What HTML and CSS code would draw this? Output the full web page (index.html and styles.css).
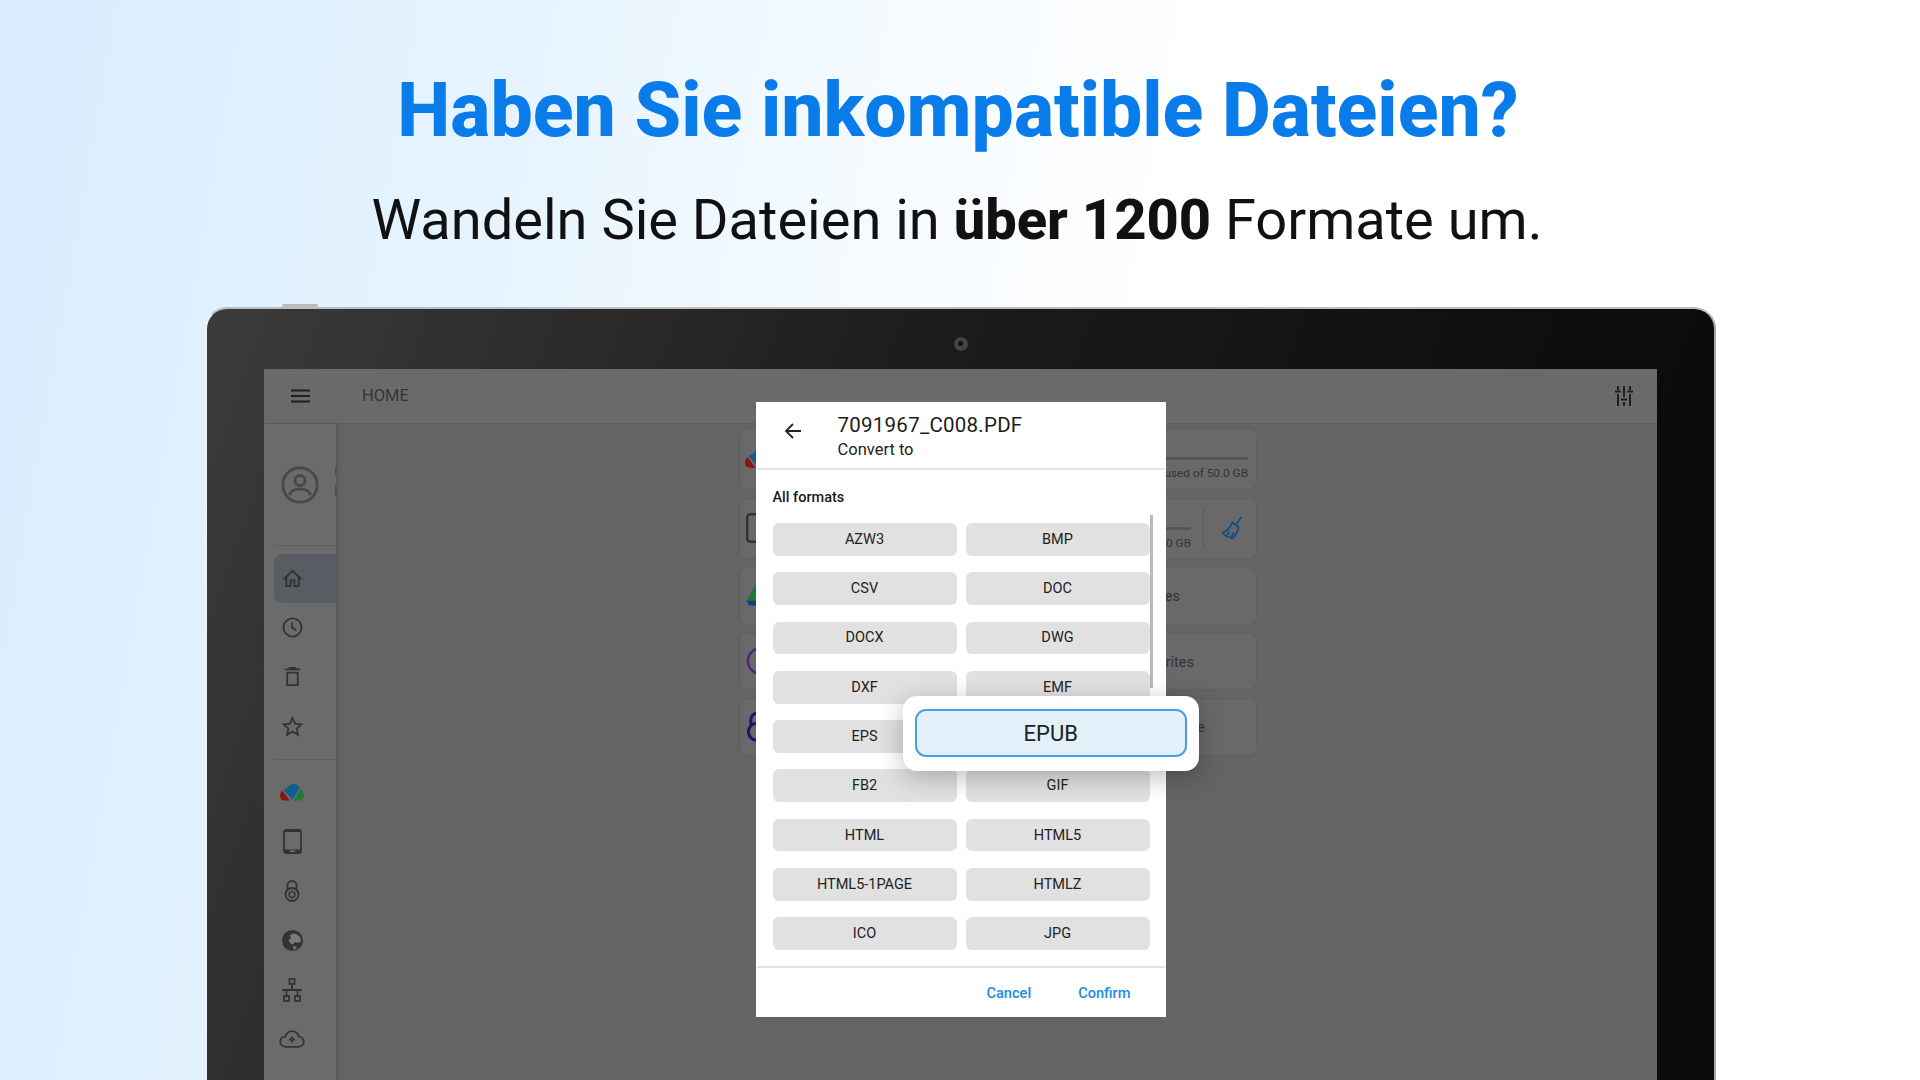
FILE: index.html
```html
<!DOCTYPE html>
<html lang="de">
<head>
<meta charset="utf-8">
<title>Haben Sie inkompatible Dateien?</title>
<link rel="stylesheet" href="styles.css">
</head>
<body>
<div class="page">
  <header class="hero">
    <h1 class="hero-title">Haben Sie inkompatible Dateien?</h1>
    <p class="hero-sub">Wandeln Sie Dateien in <strong>über 1200</strong> Formate um.</p>
  </header>

  <div class="tablet">
    <span class="tablet-button"></span>
    <div class="bezel-top"><span class="camera"><span class="camera-lens"></span></span></div>
    <div class="screen">
      <div class="topbar">
        <svg class="ic-menu" viewBox="0 0 19 14"><path d="M0 1.5h19M0 7h19M0 12.5h19"/></svg>
        <span class="topbar-title">HOME</span>
        <svg class="ic-tune" viewBox="0 0 18 20"><path d="M3 0v4M0 5.5h6M3 8v12M9 0v11M6 13.5h6M9 16v4M15 0v4M12 5.5h6M15 8v12"/></svg>
      </div>
      <div class="main">
        <aside class="sidebar">
          <span class="edge-mark edge-mark-a"></span>
          <span class="edge-mark edge-mark-b"></span>
          <div class="avatar-block">
            <svg class="ic-avatar" viewBox="0 0 38 38"><circle cx="19" cy="19" r="17.2"/><circle cx="19" cy="14.5" r="5"/><path d="M8 29c2-4.500 6-6 11-6s9 1.500 11 6"/></svg>
          </div>
          <div class="side-rule"></div>
          <nav class="side-group">
            <div class="side-item is-active"><svg class="ic" viewBox="0 0 24 24"><path d="M3 12.500 12 4l9 8.500M5.500 10.500V20H10v-6h4v6h4.500v-9.500"/></svg></div>
            <div class="side-item"><svg class="ic" viewBox="0 0 24 24"><circle cx="12" cy="12" r="9.500"/><path d="M11.500 6.500V12l4.500 3"/></svg></div>
            <div class="side-item"><svg class="ic" viewBox="0 0 24 24"><path d="M4 4.500h16M9 4.500V3h6v1.500M6.500 8h11v13h-11z"/></svg></div>
            <div class="side-item"><svg class="ic" viewBox="0 0 24 24"><path d="m12 3 2.700 6.100 6.600.7-5 4.400 1.500 6.500L12 17.300l-5.800 3.400 1.500-6.500-5-4.400 6.600-.7z"/></svg></div>
          </nav>
          <div class="side-rule side-rule-second"></div>
          <nav class="side-group side-group-second">
            <div class="side-item"><svg class="ic-logo" viewBox="0 0 24 17"><path class="c-blue" d="M3.500 6C4.500 4.600 6 4.200 7.200 4.300 8.300 1.800 10.700 0 13.700 0c3 0 5.200 1.600 6.200 4.200L12.300 15.800z"/><path class="c-red" d="M2.300 6.800 9.800 16.500H4C1.600 16.500 0 14.500 0 12c0-2 .8-3.900 2.300-5.200z"/><path class="c-green" d="M20.800 5.200 13.200 16.500h6C22 16.500 24 14.300 24 11.500c0-2.600-1.200-4.900-3.200-6.300z"/></svg></div>
            <div class="side-item"><svg class="ic-device" viewBox="0 0 19 25"><rect x="1" y="1" width="17" height="23" rx="2"/><path class="fill-line" d="M1 20.500h17v3H1zM1 1h17v2H1z"/><rect class="device-btn" x="7" y="21.500" width="5" height="1.200"/></svg></div>
            <div class="side-item"><svg class="ic-lock" viewBox="0 0 16 22"><path d="M3.500 10V5.500a4.500 4.500 0 0 1 9 0V10"/><circle cx="8" cy="14.500" r="6.500"/><path d="M8 10.500v2M8 16.500v2M4 14.500h2M10 14.500h2M5.200 11.700l1.400 1.400M9.400 15.900l1.400 1.400M10.800 11.700l-1.400 1.400M6.600 15.900l-1.400 1.400"/></svg></div>
            <div class="side-item"><svg class="ic-globe" viewBox="0 0 21 21"><circle class="globe-body" cx="10.500" cy="10.500" r="10.500"/><path class="globe-land" d="M11 3.500c3 0 6 1.500 7.500 4.500l.5 3.500-3 1.500-3-1-2 2.500-3-1.500-1.500-3L9 8l-1-2.500zM11 16l3 .5 1 2-3.500 1z"/></svg></div>
            <div class="side-item"><svg class="ic-net" viewBox="0 0 20 24"><rect x="7.500" y="1" width="5" height="5"/><rect x="2" y="18" width="5" height="5"/><rect x="13" y="18" width="5" height="5"/><path d="M10 6v6M0 12h20M4.500 12v6M15.500 12v6"/></svg></div>
            <div class="side-item"><svg class="ic-cloud" viewBox="0 0 26 18"><path d="M7 16.800c-3.300 0-5.800-2.300-5.800-5.100 0-2.700 2.200-4.800 5-5C7.500 3.300 10 1.200 13 1.200c3.400 0 6 2.400 6.800 5.500 2.900.2 5 2.300 5 5 0 2.800-2.500 5.100-5.800 5.100zM13 6.500v6M10 9.500h6"/></svg></div>
          </nav>
        </aside>

        <section class="content">
          <div class="cards">
            <div class="card card-tall">
              <svg class="card-icon" viewBox="0 0 24 17"><path class="c-blue" d="M3.500 6C4.500 4.600 6 4.200 7.200 4.300 8.300 1.800 10.700 0 13.700 0c3 0 5.200 1.600 6.200 4.200L12.300 15.800z"/><path class="c-red" d="M2.300 6.800 9.800 16.500H4C1.600 16.500 0 14.500 0 12c0-2 .8-3.900 2.300-5.200z"/></svg>
              <div class="usage usage-wide">
                <span class="usage-bar"></span>
                <span class="usage-text">0.5 GB used of 50.0 GB</span>
              </div>
            </div>
            <div class="card card-tall">
              <svg class="card-icon card-icon-device" viewBox="0 0 24 30"><rect x="1.200" y="1.200" width="21.600" height="27.600" rx="3"/></svg>
              <div class="usage usage-narrow">
                <span class="usage-bar"></span>
                <span class="usage-text">32.0 GB</span>
              </div>
              <span class="card-rule"></span>
              <svg class="ic-broom" viewBox="0 0 22 24"><path d="M20.500 1 15 8.500M11.500 6.500l6 4.500c-.5 3.500-2.500 7.500-5.500 11.500-3.500-.5-7.500-2.500-10.500-5.500 4-1.500 7.500-5.500 10-10.500zM6 19l3-3.500M10 21.500l3-5"/></svg>
            </div>
            <div class="card card-short card-label card-label-a">
              <svg class="card-icon card-icon-drive" viewBox="0 0 26 26"><path class="c-green" d="M10 2.500 1.200 17.500H26V2.500z"/><path class="c-navy" d="M1.200 17.500 4.500 22.500H26v-5z"/></svg>
              <span class="card-text">Recent files</span>
            </div>
            <div class="card card-short card-label card-label-b">
              <svg class="card-icon card-icon-ring" viewBox="0 0 30 30"><circle cx="15" cy="15" r="13"/></svg>
              <span class="card-text">Favorites</span>
            </div>
            <div class="card card-short card-label card-label-c">
              <svg class="card-icon card-icon-lock" viewBox="0 0 16 22"><path d="M3.500 10V5.500a4.500 4.500 0 0 1 9 0V10"/><circle cx="8" cy="14.500" r="6.300"/></svg>
              <span class="card-text">Secure Archive</span>
            </div>
          </div>
        </section>
      </div>

      <div class="dialog">
        <div class="dialog-head">
          <svg class="ic-back" viewBox="0 0 16 16"><path d="M16 8H1.500M8 1 1 8l7 7"/></svg>
          <div class="dialog-titles">
            <div class="dialog-title">7091967_C008.PDF</div>
            <div class="dialog-subtitle">Convert to</div>
          </div>
        </div>
        <div class="dialog-body">
          <div class="section-label">All formats</div>
          <div class="formats">
            <button class="fmt">AZW3</button><button class="fmt">BMP</button>
            <button class="fmt">CSV</button><button class="fmt">DOC</button>
            <button class="fmt">DOCX</button><button class="fmt">DWG</button>
            <button class="fmt">DXF</button><button class="fmt">EMF</button>
            <button class="fmt">EPS</button><button class="fmt"></button>
            <button class="fmt">FB2</button><button class="fmt">GIF</button>
            <button class="fmt">HTML</button><button class="fmt">HTML5</button>
            <button class="fmt">HTML5-1PAGE</button><button class="fmt">HTMLZ</button>
            <button class="fmt">ICO</button><button class="fmt">JPG</button>
          </div>
          <span class="scrollbar"></span>
        </div>
        <div class="dialog-foot">
          <span class="foot-btn">Cancel</span>
          <span class="foot-btn">Confirm</span>
        </div>
        <div class="popup"><div class="popup-btn">EPUB</div></div>
      </div>
    </div>
  </div>
</div>
</body>
</html>
```
FILE: styles.css
```css
* { box-sizing: border-box; }
html, body { margin: 0; padding: 0; }
body { font-family: Roboto, "Liberation Sans", sans-serif; }

.page {
  width: 1920px;
  height: 1080px;
  overflow: hidden;
  background: linear-gradient(100deg, #d8ecfe 0%, #e4f3ff 22%, #f4faff 42%, #ffffff 58%);
}

.hero { height: 307px; padding: 70px 4px 0 0; text-align: center; }
.hero-title { margin: 0; font-size: 75.200px; line-height: 80px; font-weight: 800; color: #0a7cea; }
.hero-sub { margin: 35px 0 0; padding-right: 2px; font-size: 56px; line-height: 70px; font-weight: 400; color: #111; }
.hero-sub strong { font-weight: 800; }

.tablet {
  position: relative;
  margin-left: 205px;
  width: 1511px;
  height: 800px;
  padding: 0 57px 0 57px;
  background: linear-gradient(110deg, #3b3b3b 0%, #2c2c2c 20%, #1b1b1b 42%, #0b0b0b 84%);
  border: 2px solid #c9c9c9;
  border-color: #bdbdbd #a8a8a8 #bbb #f2f2f2;
  border-bottom: 0;
  border-radius: 22px 22px 0 0;
  display: flex;
  flex-direction: column;
}
.tablet-button {
  position: absolute;
  left: 75px;
  top: -5px;
  width: 36px;
  height: 3px;
  background: #bcbcbc;
  border-radius: 2px 2px 0 0;
}
.bezel-top { height: 60px; flex: none; display: flex; justify-content: center; align-items: center; padding-top: 9px; }
.camera { width: 14px; height: 14px; border-radius: 50%; background: #45453f; display: flex; align-items: center; justify-content: center; }
.camera-lens { width: 5px; height: 5px; border-radius: 50%; background: #111; }

.screen { position: relative; flex: 1; display: flex; flex-direction: column; background: #646464; min-height: 0; }

.topbar {
  height: 55px;
  flex: none;
  display: flex;
  align-items: center;
  padding: 0 24px 0 27px;
  background: #6a6a6a;
  border-bottom: 1px solid #5e5e5e;
}
.ic-menu { width: 19px; height: 14px; fill: none; stroke: #1f1f1f; stroke-width: 2; }
.topbar-title { margin: -2px 0 0 52px; font-size: 16.500px; color: #353535; }
.ic-tune { margin-left: auto; width: 18px; height: 20px; fill: none; stroke: #1c1c1c; stroke-width: 2; }

.main { flex: 1; display: flex; min-height: 0; }
.sidebar {
  position: relative;
  width: 73px;
  flex: none;
  background: #6b6b6b;
  border-right: 1px solid #5a5a5a;
  box-shadow: 2px 0 3px rgba(0,0,0,.08);
}
.edge-mark { position: absolute; right: -1px; width: 2px; background: #4e4e4e; }
.edge-mark-a { top: 43px; height: 8px; }
.edge-mark-b { top: 61px; height: 10px; }

.avatar-block { height: 121px; display: flex; align-items: center; justify-content: center; padding: 1.500px 1px 0 0; }
.ic-avatar { width: 38px; height: 38px; fill: none; stroke: #4c4747; stroke-width: 2.800; }
.side-rule { height: 1px; margin: 0 0 0 10px; background: #5f5f5f; }
.side-rule-second { margin-top: 8px; }
.side-group { margin-top: 7.500px; }
.side-group-second { margin-top: 8px; }
.side-item {
  height: 49.300px;
  margin-left: 10px;
  padding-left: 8.500px;
  display: flex;
  align-items: center;
  border-radius: 8px 0 0 8px;
}
.side-item.is-active { background: #575d62; }
.ic { width: 23px; height: 23px; margin-left: -1.500px; fill: none; stroke: #333; stroke-width: 1.900; }
.ic-logo { width: 24px; height: 17px; margin-left: -2.500px; }
.c-blue { fill: #0f5e8e; }
.c-red { fill: #8a1512; }
.c-green { fill: #207a36; }
.c-navy { fill: #123e86; }
.ic-device { width: 19px; height: 25px; margin-left: 0; fill: none; stroke: #333; stroke-width: 1.800; }
.fill-line { fill: #333; stroke: none; }
.device-btn { fill: #888; stroke: none; }
.ic-lock { width: 16px; height: 22px; margin-left: 1.500px; fill: none; stroke: #333; stroke-width: 1.800; }
.ic-globe { width: 21px; height: 21px; margin-left: -1px; }
.globe-body { fill: #333; }
.globe-land { fill: #7a7a7a; }
.ic-net { width: 20px; height: 24px; margin-left: -1px; fill: none; stroke: #333; stroke-width: 1.800; }
.ic-cloud { width: 26px; height: 18px; margin-left: -4px; fill: none; stroke: #333; stroke-width: 1.800; }

.content { flex: 1; padding: 4px 0 0 402px; }
.cards { width: 518px; display: flex; flex-direction: column; gap: 8px; }
.card {
  position: relative;
  display: flex;
  align-items: center;
  padding-left: 5px;
  background: #696969;
  border: 1px solid #5f5f5f;
  border-radius: 8px;
  color: #343434;
  font-size: 14.500px;
}
.card-tall { height: 61.500px; }
.card-short { height: 57.500px; }
.card-icon { width: 26px; height: 20px; flex: none; }
.card-icon-drive { height: 26px; }
.card-icon-device { width: 24px; height: 30px; fill: none; stroke: #333; stroke-width: 2.400; margin-left: 1px; }
.card-icon-ring { width: 30px; height: 30px; fill: none; stroke: #52207f; stroke-width: 2.400; margin-left: 1px; }
.card-icon-lock { width: 22px; height: 30px; fill: none; stroke: #1b1668; stroke-width: 2.200; margin-left: 1px; }
.usage { margin-left: auto; display: flex; flex-direction: column; align-items: flex-end; padding-top: 20px; }
.usage-wide { margin-right: 8px; }
.usage-narrow { margin-right: 0; }
.usage-bar { width: 160px; height: 3px; background: #575757; }
.usage-text { margin-top: 6px; font-size: 11.800px; line-height: 14px; color: #343434; }
.card-rule { width: 1px; height: 40px; margin-left: 12px; background: #5c5c5c; }
.ic-broom { width: 22px; height: 24px; margin: 0 13px 0 17px; fill: none; stroke: #0a4d88; stroke-width: 1.700; }
.card-text { margin: 2px 0 0 auto; white-space: nowrap; }
.card-label-a .card-text { margin-right: 76px; }
.card-label-b .card-text { margin-right: 62px; }
.card-label-c .card-text { margin-right: 51px; }

.dialog {
  position: absolute;
  left: 491.500px;
  top: 33px;
  width: 410px;
  height: 615px;
  background: #fff;
  display: flex;
  flex-direction: column;
  color: #1a1a1a;
}
.dialog-head { height: 68px; flex: none; display: flex; padding-left: 28.500px; border-bottom: 2px solid #e4e4e4; margin: 0 1px; }
.ic-back { width: 16px; height: 16px; margin-top: 20.500px; flex: none; fill: none; stroke: #222; stroke-width: 1.800; }
.dialog-titles { margin-left: 36.500px; padding-top: 11px; }
.dialog-title { font-size: 20.500px; line-height: 24px; letter-spacing: .25px; color: #1c1c1c; }
.dialog-subtitle { margin-top: 3px; font-size: 16.500px; line-height: 20px; color: #222; }

.dialog-body { position: relative; flex: 1; padding: 19px 17px 0; min-height: 0; overflow: visible; }
.section-label { font-size: 14.500px; line-height: 18px; font-weight: 500; color: #1a1a1a; }
.formats {
  margin-top: 16px;
  display: grid;
  grid-template-columns: 184px 184px;
  grid-auto-rows: 32.700px;
  column-gap: 9px;
  row-gap: 16.600px;
}
.fmt {
  border: 0;
  padding: 0;
  background: #e1e1e1;
  border-radius: 6px;
  font: 400 14.500px Roboto, sans-serif;
  color: #222;
}
.scrollbar { position: absolute; right: 12.500px; top: 45px; width: 3.500px; height: 173px; background: #b9b9b9; }

.dialog-foot {
  height: 51px;
  flex: none;
  display: flex;
  align-items: center;
  justify-content: flex-end;
  gap: 47px;
  margin: 0 1px;
  padding-right: 34px;
  border-top: 2px solid #e4e4e4;
}
.foot-btn { font-size: 14.600px; font-weight: 500; color: #1b8ae4; }

.popup {
  position: absolute;
  left: 147.500px;
  top: 294.300px;
  width: 295.500px;
  height: 74.700px;
  padding: 13px 11.500px;
  background: #fff;
  border-radius: 14px;
  box-shadow: 0 6px 26px rgba(0,0,0,.26);
}
.popup-btn {
  height: 48px;
  border: 2px solid #4a9fdc;
  border-radius: 11px;
  background: #e3f0fa;
  display: flex;
  align-items: center;
  justify-content: center;
  font-size: 22px;
  color: #222;
}
```
